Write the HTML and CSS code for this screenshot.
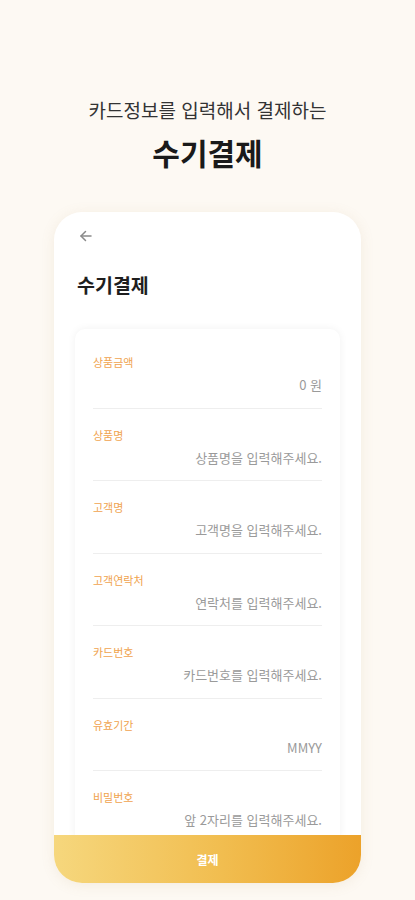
FILE: index.html
```html
<!DOCTYPE html>
<html lang="ko">
<head>
    <meta charset="UTF-8">
    <meta name="viewport" content="width=device-width, initial-scale=1.0">
    <title>수기결제</title>
    <link rel="stylesheet" href="styles.css">
</head>
<body>
    <header class="intro">
        <p class="intro-sub">카드정보를 입력해서 결제하는</p>
        <h1 class="intro-title">수기결제</h1>
    </header>
    <main class="phone">
        <div class="phone-top">
            <button class="back-btn" aria-label="뒤로">
                <svg width="16" height="16" viewBox="0 0 16 16" fill="none" stroke="#8a8a8a" stroke-width="1.5" stroke-linecap="round" stroke-linejoin="round">
                    <path d="M13 8H3"/>
                    <path d="M7.5 3.5L3 8l4.5 4.5"/>
                </svg>
            </button>
            <h2 class="page-title">수기결제</h2>
        </div>
        <div class="scroll">
            <div class="form-card">
                <div class="field">
                    <label class="field-label">상품금액</label>
                    <div class="field-value">0 원</div>
                </div>
                <div class="field">
                    <label class="field-label">상품명</label>
                    <div class="field-value">상품명을 입력해주세요.</div>
                </div>
                <div class="field">
                    <label class="field-label">고객명</label>
                    <div class="field-value">고객명을 입력해주세요.</div>
                </div>
                <div class="field">
                    <label class="field-label">고객연락처</label>
                    <div class="field-value">연락처를 입력해주세요.</div>
                </div>
                <div class="field">
                    <label class="field-label">카드번호</label>
                    <div class="field-value">카드번호를 입력해주세요.</div>
                </div>
                <div class="field">
                    <label class="field-label">유효기간</label>
                    <div class="field-value">MMYY</div>
                </div>
                <div class="field">
                    <label class="field-label">비밀번호</label>
                    <div class="field-value">앞 2자리를 입력해주세요.</div>
                </div>
            </div>
        </div>
        <button class="pay-btn">결제</button>
    </main>
</body>
</html>
```

FILE: styles.css
```css
* {
    margin: 0;
    padding: 0;
    box-sizing: border-box;
}
body {
    background: #fdf9f3;
    font-family: "Noto Sans CJK KR", "Noto Sans", sans-serif;
    color: #222;
    width: 415px;
    height: 900px;
    overflow: hidden;
}
.intro {
    text-align: center;
    padding-top: 96px;
}
.intro-sub {
    font-size: 19px;
    line-height: 28px;
    color: #333;
    font-weight: 400;
}
.intro-title {
    font-size: 30px;
    line-height: 38px;
    font-weight: 700;
    margin-top: 9px;
    color: #1a1a1a;
}
.phone {
    margin: 41px 0 0 54px;
    width: 307px;
    height: 671px;
    background: #fff;
    border-radius: 28px;
    box-shadow: 0 2px 14px rgba(170, 140, 90, 0.12);
    overflow: hidden;
    display: flex;
    flex-direction: column;
}
.phone-top {
    padding: 16px 23px 0;
}
.back-btn {
    display: block;
    border: none;
    background: none;
    width: 16px;
    height: 16px;
    margin-left: 1px;
}
.back-btn svg {
    display: block;
}
.page-title {
    font-size: 19.5px;
    line-height: 26px;
    font-weight: 700;
    margin-top: 28px;
    color: #1e1e1e;
}
.scroll {
    flex: 1;
    overflow: hidden;
    padding: 31px 21px 0;
}
.form-card {
    background: #fff;
    border-radius: 10px;
    box-shadow: 0 0 8px rgba(0, 0, 0, 0.06);
    padding: 14px 18px 0;
}
.field {
    padding: 19px 0 13.5px;
    border-bottom: 1px solid #eeeeee;
}
.field:first-child {
    padding-top: 12px;
}
.field-label {
    display: block;
    font-size: 11px;
    line-height: 14px;
    color: #f0a34e;
}
.field-value {
    margin-top: 7px;
    font-size: 13px;
    line-height: 18px;
    color: #9a9a9a;
    text-align: right;
}
.pay-btn {
    flex: none;
    height: 48px;
    border: none;
    width: 100%;
    background: linear-gradient(90deg, #f6d77d, #f1bd4f 55%, #eca22a);
    color: #fff;
    font-family: inherit;
    font-size: 12px;
    font-weight: 700;
}
```
